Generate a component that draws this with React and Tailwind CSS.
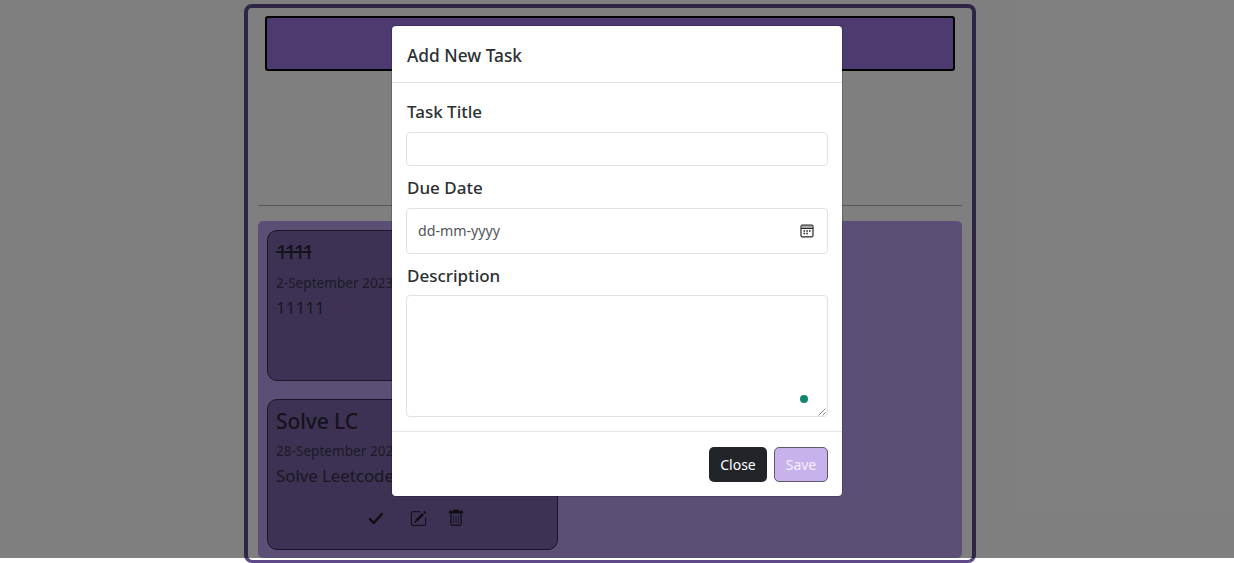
import React from "react";

function CheckIcon() {
  return (
    <svg width="16" height="14" viewBox="0 0 16 14" fill="none" stroke="currentColor" strokeWidth="2.5" strokeLinecap="round" strokeLinejoin="round">
      <path d="M2 8.200 5.700 12 13.800 3" />
    </svg>
  );
}

function EditIcon() {
  return (
    <svg width="17" height="17" viewBox="0 0 17 17" fill="none" stroke="currentColor">
      <path d="M10 1.700H2.700A1.300 1.300 0 0 0 1.400 3v11a1.300 1.300 0 0 0 1.300 1.300h11.600a1.300 1.300 0 0 0 1.300-1.300V7.500" strokeWidth="1.200" opacity="0.85" />
      <path d="M6.300 10.700 13 4" strokeWidth="2.600" />
      <path d="M14.200 2.800 15.300 1.700" strokeWidth="2.600" />
      <path d="M4.300 12.700 6.300 10.700" strokeWidth="1.300" />
    </svg>
  );
}

function TrashIcon() {
  return (
    <svg width="16" height="18" viewBox="0 0 16 18" fill="none" stroke="currentColor">
      <path d="M2.300 3.200h11.400" strokeWidth="2.800" strokeLinecap="round" />
      <path d="M5.500 1.300h5" strokeWidth="1.400" />
      <path d="M3 4.500v10.200a1.500 1.500 0 0 0 1.500 1.500h7a1.500 1.500 0 0 0 1.500-1.500V4.500" strokeWidth="1.200" />
      <path d="M5.700 6.500v7.500M8 6.500v7.500M10.300 6.500v7.500" strokeWidth="0.900" opacity="0.8" />
    </svg>
  );
}

function CalendarIcon() {
  return (
    <svg width="14" height="14" viewBox="0 0 14 14" fill="none" stroke="#24272a">
      <rect x="1" y="1.200" width="12" height="11.600" rx="1.200" strokeWidth="1.200" />
      <path d="M1.600 2.700h10.800" stroke="#a5a5a5" strokeWidth="1.800" />
      <path d="M1 4.400h12" strokeWidth="1.200" />
      <path d="M3.500 7h1.600M6.300 7h1.600M9 7h1.600M3.500 9.600h1.600M6.300 9.600h1.600" strokeWidth="1.500" />
    </svg>
  );
}

function TaskCard({ title, date, text, done }) {
  return (
    <article className="flex h-[151px] w-[291px] flex-col rounded-[10px] border-[1.500px] border-[#3a2852] bg-[#7a64a8] px-2 pt-[6px]">
      <h2 className={done ? "h-[29px] text-[20px] leading-[29px] font-medium tracking-[-2.6px] whitespace-nowrap text-[#2a2636] line-through" : "h-[29px] text-[21px] leading-[31px] font-medium tracking-[-0.1px] whitespace-nowrap text-[#2a2636]"}>{title}</h2>
      <p className={done ? "mt-[4px] h-[24px] text-[13.6px] leading-[26px] whitespace-nowrap text-[#3b3450]" : "mt-[4px] h-[24px] text-[13.6px] leading-[24px] whitespace-nowrap text-[#3b3450]"}>{date}</p>
      <p className={done ? "h-[26px] text-[17px] leading-[27px] whitespace-nowrap text-[#342e44]" : "h-[26px] text-[17px] leading-[25px] tracking-[-0.1px] whitespace-nowrap text-[#342e44]"}>{text}</p>
      {!done && (
        <div className="mt-[20px] ml-[92px] flex h-[18px] items-center text-[#1e1c26]">
          <CheckIcon />
          <span className="ml-[26px]"><EditIcon /></span>
          <span className="ml-[21px]"><TrashIcon /></span>
        </div>
      )}
    </article>
  );
}

function Board() {
  return (
    <main className="ml-[244px] h-[559px] w-[732px] rounded-lg border-x-4 border-t-4 border-b-[3px] border-[#5f4a88] px-[10px] pt-2">
      <header className="mx-[7px] h-[55px] rounded-[3px] border-2 border-black bg-[#9b75e0]" />
      <hr className="mt-[134px] border-[#b2b2b2]" />
      <section className="mt-[15px] flex h-[337px] flex-col gap-[18px] rounded-[5px] bg-[#b89eea] pt-[9px] pl-[9px]">
        <TaskCard title="1111" date="2-September 2023" text="11111" done />
        <TaskCard title="Solve LC" date="28-September 2023" text="Solve Leetcode" />
      </section>
    </main>
  );
}

function TaskDialog() {
  return (
    <div role="dialog" className="flex h-[470px] w-[450px] flex-col rounded-[4px] bg-white text-[#2b2f33] shadow-[0_0_0_1px_rgba(0,0,0,0.18)]">
      <div className="flex h-[57px] items-center border-b border-[#dee2e6] px-[15px] pt-[2px]">
        <h1 className="text-[17.3px] leading-[27px] font-medium">Add New Task</h1>
      </div>
      <form className="flex h-[348px] flex-col px-[14px] pt-[15px]">
        <label className="ml-px h-[27px] w-fit text-[17px] leading-[27px] font-medium">Task Title</label>
        <input className="mt-[7px] h-[34px] w-[422px] shrink-0 rounded-[4px] border border-[#dee2e6]" />
        <label className="mt-[8px] ml-px h-[27px] w-fit text-[17px] leading-[27px] font-medium">Due Date</label>
        <div className="mt-[7px] flex h-[46px] w-[422px] shrink-0 items-center justify-between rounded-[4px] border border-[#dee2e6] pr-[13px] pl-[11px]">
          <span className="text-[14.200px] text-[#51565b]">dd-mm-yyyy</span>
          <CalendarIcon />
        </div>
        <label className="mt-[8px] ml-px h-[27px] w-fit text-[17px] leading-[27px] font-medium">Description</label>
        <div className="relative mt-[6px] h-[122px] w-[422px] shrink-0">
          <textarea className="block h-full w-full resize-none rounded-[4px] border border-[#dee2e6]" />
          <span className="absolute top-[100px] left-[394px] size-2 rounded-full bg-[#11866f]" />
          <svg className="absolute right-[2px] bottom-[1px]" width="8" height="8" viewBox="0 0 8 8" fill="none" stroke="#777777" strokeWidth="0.9">
            <path d="M0.500 7.500 7.500 0.500M4.500 7.500 7.500 4.500" />
          </svg>
        </div>
      </form>
      <div className="flex h-[65px] justify-end gap-[7px] border-t border-[#e3e6e9] pt-[15px] pr-[14px]">
        <button className="h-[35px] w-[58px] rounded-[5px] bg-[#212529] text-[14px] text-white">Close</button>
        <button className="h-[35px] w-[54px] rounded-[5px] border border-[#5f5a6b] bg-[#c7b2ec] text-[14px] text-[#f6f1fd]">Save</button>
      </div>
    </div>
  );
}

export default function App() {
  return (
    <div className="relative h-[563px] w-[1234px] overflow-hidden bg-white pt-1 font-['Noto_Sans','Open_Sans',sans-serif]">
      <Board />
      <div className="absolute inset-x-0 top-0 flex h-[558px] items-start justify-center bg-black/50 pt-[26px]">
        <TaskDialog />
      </div>
    </div>
  );
}
